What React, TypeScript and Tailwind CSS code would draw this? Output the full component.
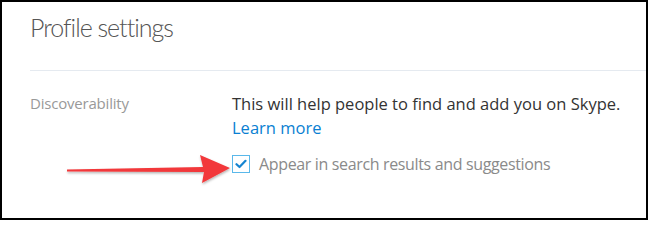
export default function App() {
  return (
    <div className="relative w-[648px] h-[220px] bg-white border-2 border-black overflow-hidden font-['Open_Sans',sans-serif]">
      <div className="pl-[28px]">
        <h1 className="pt-[7px] h-[68px] text-[25px] font-light font-['Lato',sans-serif] text-[#555] tracking-[-1px]">Profile settings</h1>
        <div className="border-t border-[#e5eaf0]" />

        <div className="flex pt-[21px]">
          <div className="w-[202px] text-[15px] text-[#999] leading-[22px] tracking-[-0.2px]">Discoverability</div>
          <div className="flex-1">
            <p className="text-[16.5px] text-[#333] leading-[24px]">
              This will help people to find and add you on Skype.
            </p>
            <a href="#" className="block text-[16.5px] text-[#0a7fd2] leading-[24px]">Learn more</a>
            <label className="flex items-center gap-[9px] mt-[12px]">
              <span className="flex items-center justify-center w-[18px] h-[18px] border-[1.5px] border-[#5ab8ea] bg-white">
                <svg width="12" height="10" viewBox="0 0 12 10">
                  <path d="M1.5 5.2 L4.5 8 L10.5 1.8" fill="none" stroke="#1684d0" strokeWidth="2.2" strokeLinecap="round" strokeLinejoin="round" />
                </svg>
              </span>
              <span className="text-[16px] text-[#8a8a8a] leading-[24px] tracking-[-0.35px]">Appear in search results and suggestions</span>
            </label>
          </div>
        </div>
      </div>

      {/* annotation arrow */}
      <svg className="absolute left-[60px] top-[147px]" width="172" height="40" viewBox="0 0 172 40">
        <defs>
          <filter id="sh" x="-10%" y="-30%" width="120%" height="160%">
            <feDropShadow dx="0.5" dy="1.5" stdDeviation="1" floodColor="#000" floodOpacity="0.3" />
          </filter>
        </defs>
        <path
          d="M5 20.5 L141 18 L138 6 L168 19 L140 34 L142 23 L5 22.5 Z"
          fill="#f2383a"
          filter="url(#sh)"
        />
      </svg>
    </div>
  );
}
